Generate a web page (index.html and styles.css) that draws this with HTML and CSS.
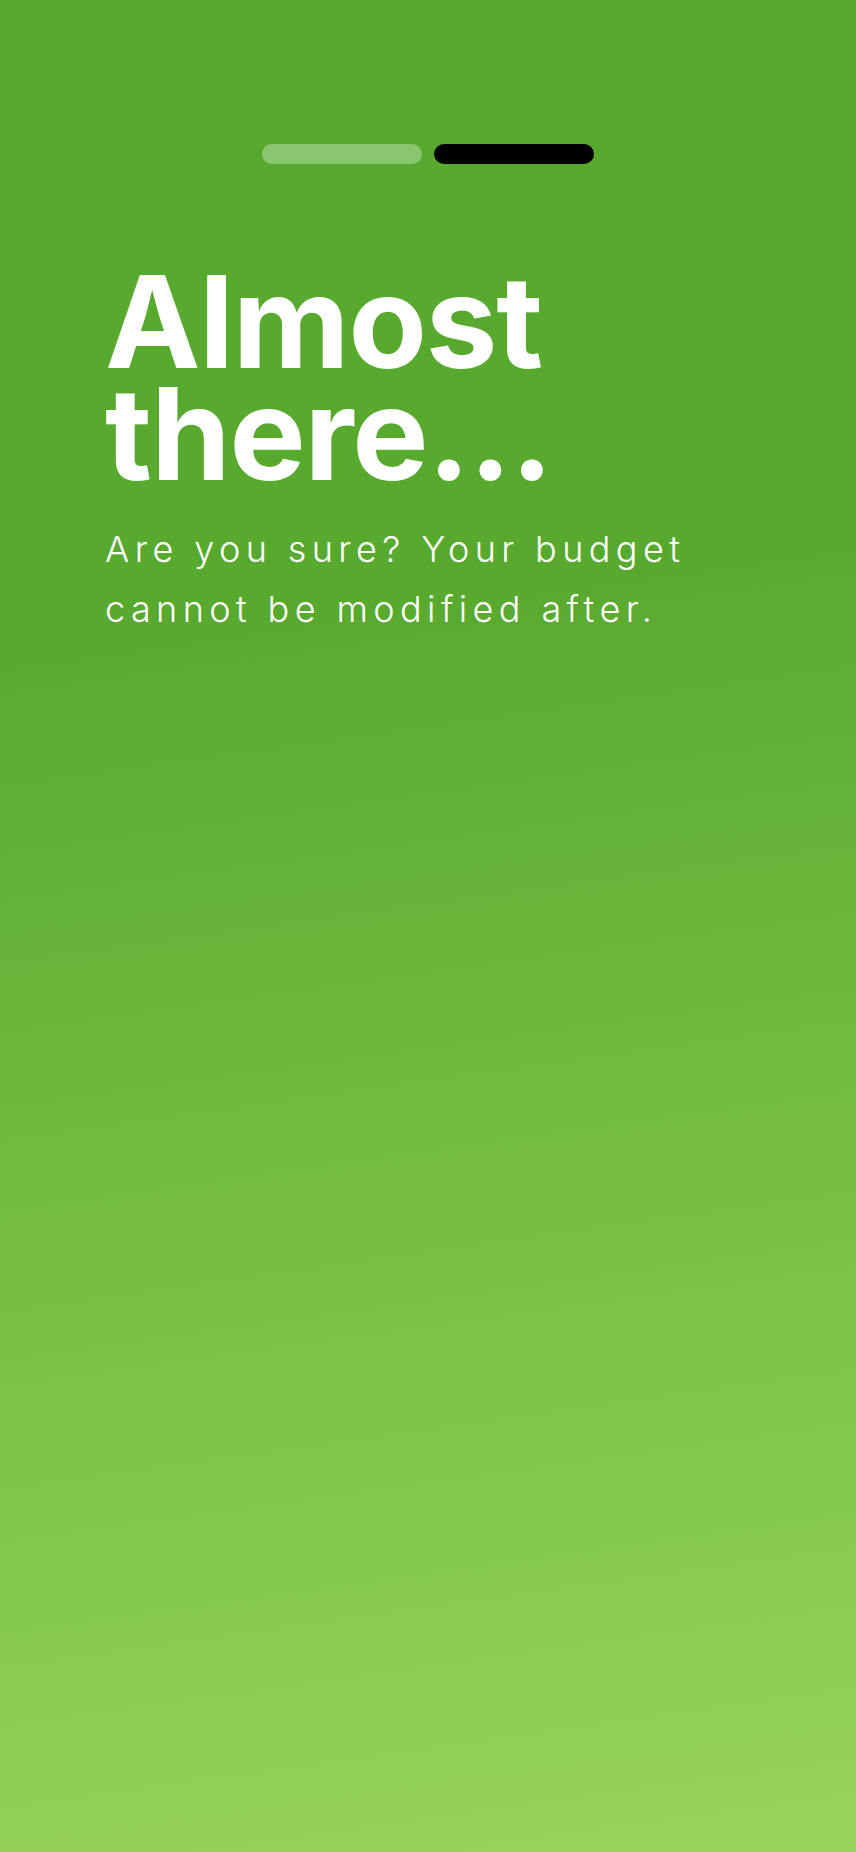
FILE: index.html
```html
<!DOCTYPE html>
<html lang="en">
<head>
<meta charset="utf-8">
<title>Almost there</title>
<link rel="stylesheet" href="styles.css">
</head>
<body>
<main class="screen">
  <div class="steps">
    <span class="step step-done"></span>
    <span class="step step-current"></span>
  </div>
  <section class="content">
    <h1 class="title">Almost there...</h1>
    <p class="subtitle">Are you sure? Your budget cannot be modified after.</p>
  </section>
</main>
</body>
</html>
```

FILE: styles.css
```css
* { box-sizing: border-box; }
html, body { margin: 0; padding: 0; }
body {
  font-family: Inter, "Noto Sans", "Liberation Sans", sans-serif;
  color: #fff;
}
.screen {
  width: 856px;
  height: 1852px;
  background: linear-gradient(172deg, #58aa2f 0%, #58aa2f 33%, #97d55a 100%);
  padding-top: 144px;
  display: flex;
  flex-direction: column;
}
.steps {
  display: flex;
  justify-content: center;
  gap: 12px;
}
.step {
  width: 160px;
  height: 20px;
  border-radius: 10px;
}
.step-done { background: #8bc56f; }
.step-current { background: #000; }
.content {
  padding: 0 60px 0 105px;
  margin-top: 102px;
}
.title {
  margin: 0;
  font-size: 128px;
  font-weight: 700;
  line-height: 112px;
  letter-spacing: -1.2px;
  width: 500px;
}
.subtitle {
  margin: 29px 0 0;
  font-size: 36px;
  font-weight: 300;
  line-height: 60px;
  letter-spacing: 5.4px;
  width: 660px;
}
```
